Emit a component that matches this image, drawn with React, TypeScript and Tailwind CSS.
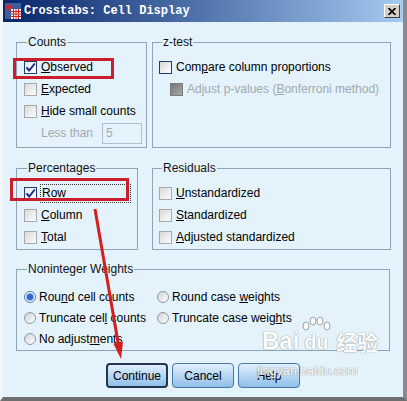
import React from 'react';

type BoxKind = 'checked' | 'dark' | 'plain' | 'disabled';

function CheckBox({ kind }: { kind: BoxKind }) {
  if (kind === 'checked') {
    return (
      <span className="flex h-[13px] w-[13px] shrink-0 items-center justify-center border border-[#1c3d6e] bg-linear-to-br from-[#e6e6e6] to-white">
        <svg width="11" height="11" viewBox="0 0 11 11">
          <path d="M1.5 5.5 L4.2 8.5 L9.8 1.5" fill="none" stroke="#1b2a8a" strokeWidth="2" />
        </svg>
      </span>
    );
  }
  if (kind === 'dark') {
    return <span className="h-[13px] w-[13px] shrink-0 border border-[#1c3d6e] bg-linear-to-br from-[#d8d8d8] to-white" />;
  }
  if (kind === 'disabled') {
    return <span className="h-[13px] w-[13px] shrink-0 border border-[#7c7c7c] bg-linear-to-br from-[#777] to-[#a8a8a8]" />;
  }
  return <span className="h-[13px] w-[13px] shrink-0 border border-[#a8a8a8] bg-linear-to-br from-[#dadada] to-[#fcfcfc]" />;
}

function Radio({ on }: { on?: boolean }) {
  if (on) {
    return (
      <span className="flex h-[12px] w-[12px] shrink-0 items-center justify-center rounded-full border border-[#5577aa] bg-white">
        <span className="h-[6px] w-[6px] rounded-full bg-[#2b66d0] shadow-[0_0_0_1px_#8fb0e0]" />
      </span>
    );
  }
  return <span className="h-[12px] w-[12px] shrink-0 rounded-full border border-[#8f98a2] bg-linear-to-br from-[#cfd4d9] to-white" />;
}

function Group({ title, className, children }: { title: string; className: string; children: React.ReactNode }) {
  return (
    <fieldset className={`border border-[#8ea3b4] ${className}`}>
      <legend className="ml-[3px] px-[1px] leading-[14px] text-[#111]">{title}</legend>
      {children}
    </fieldset>
  );
}

const u = (s: string) => <span className="underline underline-offset-[1px]">{s}</span>;

function Row({ box, children, className = '' }: { box: React.ReactNode; children: React.ReactNode; className?: string }) {
  return (
    <div className={`flex h-[22px] items-center gap-[4px] ${className}`}>
      {box}
      <span className="whitespace-nowrap">{children}</span>
    </div>
  );
}

function RadioRow({ on, children }: { on?: boolean; children: React.ReactNode }) {
  return (
    <div className="flex h-[21px] items-center gap-[3px]">
      <Radio on={on} />
      <span className="whitespace-nowrap">{children}</span>
    </div>
  );
}

function TitleIcon() {
  return (
    <svg width="16" height="16" viewBox="0 0 16 16">
      <rect x="0" y="0" width="16" height="16" fill="#3c5d9c" />
      <rect x="6" y="6" width="10" height="10" fill="#fff" />
      <path d="M6 8.5 H16 M6 11 H16 M6 13.5 H16 M8.5 6 V16 M11 6 V16 M13.5 6 V16" stroke="#d02020" strokeWidth="1" />
      <path d="M4 1 V8 M0.5 4.5 H7.5" stroke="#e02424" strokeWidth="2.2" />
    </svg>
  );
}

function Button({ label, primary }: { label: string; primary?: boolean }) {
  return (
    <button
      className={`h-[25px] w-[62px] rounded-[4px] bg-linear-to-b from-[#e0effc] to-[#8fbfea] text-[12px] text-black ${
        primary ? 'border-[2px] border-[#22364f]' : 'border border-[#4877a6]'
      }`}
    >
      {label}
    </button>
  );
}

export default function App() {
  return (
    <div className="relative h-[401px] w-[407px] overflow-hidden border-b-[4px] border-l-[3px] border-r-[4px] border-b-[#6f6f6f] border-l-[#f3f7f9] border-r-[#8a8a8a] bg-[#e4f3fb] font-['Liberation_Sans',Arial,sans-serif] text-[12px] text-black">
      {/* Title bar */}
      <div className="flex h-[22px] items-center bg-linear-to-r from-[#0a246a] to-[#a6caf0] pl-[2px] pr-[3px]">
        <TitleIcon />
        <span className="ml-[3px] font-['Liberation_Mono',monospace] text-[12px] font-bold text-white">Crosstabs: Cell Display</span>
        <span className="ml-auto flex h-[14px] w-[16px] items-center justify-center border border-b-[#404040] border-l-white border-r-[#404040] border-t-white bg-[#d4d0c8]">
          <svg width="8" height="7" viewBox="0 0 8 7">
            <path d="M0.5 0 L7.5 7 M7.5 0 L0.5 7" stroke="#000" strokeWidth="1.6" />
          </svg>
        </span>
      </div>

      <div className="pl-[13px] pt-[13px]">
        {/* Counts / z-test */}
        <div className="flex gap-[5px]">
          <Group title="Counts" className="h-[113px] w-[131px] pl-[7px] pt-[7px]">
            <Row box={<CheckBox kind="checked" />}>{u('O')}bserved</Row>
            <Row box={<CheckBox kind="plain" />}>{u('E')}xpected</Row>
            <Row box={<CheckBox kind="plain" />}>{u('H')}ide small counts</Row>
            <div className="flex h-[22px] items-center pl-[17px]">
              <span className="w-[61px] text-[#a0a8b0]">Less than</span>
              <span className="flex h-[21px] w-[40px] items-center border border-[#b2c0cb] pl-[3px] text-[#a0a8b0]">5</span>
            </div>
          </Group>
          <Group title="z-test" className="h-[113px] w-[239px] pl-[6px] pt-[7px]">
            <Row box={<CheckBox kind="dark" />}>Com{u('p')}are column proportions</Row>
            <Row box={<CheckBox kind="disabled" />} className="pl-[11px] text-[#a0a8b0]">
              Adjust p-values ({u('B')}onferroni method)
            </Row>
          </Group>
        </div>

        {/* Percentages / Residuals */}
        <div className="mt-[13px] flex gap-[14px]">
          <Group title="Percentages" className="h-[89px] w-[122px] pl-[7px] pt-[7px]">
            <div className="flex h-[22px] items-center gap-[3px]">
              <CheckBox kind="checked" />
              <span className="flex h-[19px] w-[91px] items-center border border-dotted border-[#333] pl-[1px]">{u('R')}ow</span>
            </div>
            <Row box={<CheckBox kind="plain" />}>{u('C')}olumn</Row>
            <Row box={<CheckBox kind="plain" />}>{u('T')}otal</Row>
          </Group>
          <Group title="Residuals" className="h-[89px] w-[239px] pl-[6px] pt-[7px]">
            <Row box={<CheckBox kind="plain" />}>{u('U')}nstandardized</Row>
            <Row box={<CheckBox kind="plain" />}>{u('S')}tandardized</Row>
            <Row box={<CheckBox kind="plain" />}>{u('A')}djusted standardized</Row>
          </Group>
        </div>

        {/* Noninteger Weights */}
        <Group title="Noninteger Weights" className="mt-[12px] flex h-[89px] w-[374px] pl-[7px] pt-[10px]">
          <div className="flex">
            <div className="w-[133px]">
              <RadioRow on>Rou{u('n')}d cell counts</RadioRow>
              <RadioRow>Truncate cel{u('l')} counts</RadioRow>
              <RadioRow>No adjust{u('m')}ents</RadioRow>
            </div>
            <div>
              <RadioRow>Round case {u('w')}eights</RadioRow>
              <RadioRow>Truncate case weig{u('h')}ts</RadioRow>
            </div>
          </div>
        </Group>
      </div>

      {/* Buttons */}
      <div className="mt-[12px] flex justify-center gap-[4px]">
        <Button label="Continue" primary />
        <Button label="Cancel" />
        <Button label="Help" />
      </div>

      {/* Watermark */}
      <div className="pointer-events-none absolute left-[259px] top-[316px] flex items-end text-white opacity-90 [text-shadow:0_0_1px_#8a8a8a,0_0_1px_#8a8a8a]">
        <span className="text-[24px] font-bold leading-[28px]">Bai</span>
        <span className="flex flex-col items-center">
          <svg width="34" height="16" viewBox="0 0 34 16" className="mb-[-3px]">
            <g fill="#fff" stroke="#9a9a9a" strokeWidth="1">
              <ellipse cx="7" cy="10" rx="3" ry="4" />
              <ellipse cx="14" cy="5" rx="3" ry="4" />
              <ellipse cx="21" cy="5" rx="3" ry="4" />
              <ellipse cx="28" cy="10" rx="3" ry="4" />
            </g>
          </svg>
          <span className="text-[20px] font-bold leading-[26px]">du</span>
        </span>
        <span className="ml-[3px] font-['Noto_Sans_CJK_SC',sans-serif] text-[21px] font-bold leading-[28px]">经验</span>
      </div>
      <span className="pointer-events-none absolute left-[254px] top-[364px] text-[12.5px] leading-[14px] text-white opacity-90 [text-shadow:0_0_1px_#8a8a8a,0_0_1px_#8a8a8a]">
        jingyan.baidu.com
      </span>

      {/* Annotations */}
      <svg className="pointer-events-none absolute left-[-3px] top-0" width="407" height="401">
        <rect x="14.5" y="59.5" width="98" height="18" fill="none" stroke="#cc1d2c" strokeWidth="3" />
        <rect x="11.5" y="179.5" width="116" height="20" fill="none" stroke="#cc1d2c" strokeWidth="3" />
        <line x1="95" y1="209" x2="118.5" y2="345" stroke="#d21f1f" strokeWidth="3" />
        <polygon points="121,359 113.3,343.6 123,342" fill="#d21f1f" />
      </svg>
    </div>
  );
}
